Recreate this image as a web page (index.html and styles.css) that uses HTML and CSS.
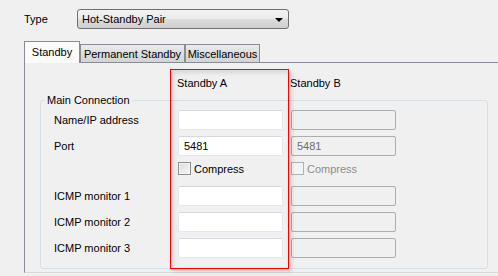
FILE: index.html
```html
<!DOCTYPE html>
<html lang="en">
<head>
  <meta charset="UTF-8">
  <meta name="viewport" content="width=device-width, initial-scale=1.0">
  <title>Hot-Standby Pair</title>
  <link rel="stylesheet" href="styles.css">
</head>
<body>
  <div class="type-row">
    <span class="type-label">Type</span>
    <div class="combo">
      <span>Hot-Standby Pair</span>
      <span class="arrow"></span>
    </div>
  </div>

  <div class="tabs">
    <div class="tab active">Standby</div>
    <div class="tab tab-permanent">Permanent Standby</div>
    <div class="tab tab-misc">Miscellaneous</div>
  </div>

  <div class="panel">
    <div class="col-heads">
      <span>Standby A</span>
      <span>Standby B</span>
    </div>

    <fieldset class="group">
      <legend>Main Connection</legend>
      <div class="form">
        <span class="label">Name/IP address</span>
        <div class="field"></div>
        <div class="field disabled"></div>

        <span class="label">Port</span>
        <div class="field">5481</div>
        <div class="field disabled">5481</div>

        <span></span>
        <div class="check-row"><span class="check"></span>Compress</div>
        <div class="check-row disabled"><span class="check"></span>Compress</div>

        <span class="label">ICMP monitor 1</span>
        <div class="field"></div>
        <div class="field disabled"></div>

        <span class="label">ICMP monitor 2</span>
        <div class="field"></div>
        <div class="field disabled"></div>

        <span class="label">ICMP monitor 3</span>
        <div class="field"></div>
        <div class="field disabled"></div>
      </div>
    </fieldset>
  </div>

  <div class="highlight"></div>
</body>
</html>
```

FILE: styles.css
```css
body {
	margin: 0;
	width: 498px;
	height: 276px;
	overflow: hidden;
	background: #f0f0f0;
	font-family: "Liberation Sans", Arial, sans-serif;
	font-size: 11px;
	color: #000;
	position: relative;
}

.type-row {
	display: flex;
	align-items: center;
	padding: 9px 0 0 24px;
}

.type-label {
	width: 53px;
}

.combo {
	box-sizing: border-box;
	width: 212px;
	height: 20px;
	display: flex;
	align-items: center;
	justify-content: space-between;
	padding: 0 5px 0 4px;
	border: 1px solid #707070;
	border-radius: 3px;
	background: linear-gradient(#f2f2f2, #ebebeb 50%, #dddddd 50%, #cfcfcf);
}

.arrow {
	width: 0;
	height: 0;
	border-left: 4px solid transparent;
	border-right: 4px solid transparent;
	border-top: 4px solid #000;
	margin-top: 1px;
}

.tabs {
	display: flex;
	align-items: flex-end;
	height: 21px;
	margin: 12px 0 0 24px;
}

.tab {
	box-sizing: border-box;
	height: 18px;
	display: flex;
	align-items: center;
	justify-content: center;
	border: 1px solid #898c95;
	border-bottom: none;
	background: linear-gradient(#ececec, #dddddd 50%, #d4d4d4);
	color: #000;
}

.tab.active {
	position: relative;
	z-index: 1;
	width: 56px;
	height: 22px;
	margin-bottom: -1px;
	padding-bottom: 2px;
	background: #fbfbfb;
}

.tab-permanent {
	width: 105px;
}

.tab-misc {
	width: 75px;
}

.panel {
	margin-left: 24px;
	border-top: 1px solid #898c95;
	border-left: 1px solid #898c95;
	border-bottom: 1px solid #d9d9d9;
	padding-bottom: 3px;
}

.col-heads {
	display: grid;
	grid-template-columns: 113px auto;
	padding: 13px 0 0 152px;
	line-height: 14px;
}

.group {
	width: 448px;
	box-sizing: border-box;
	margin: 3px 0 0 15px;
	padding: 0 0 10px 0;
	border: 1px solid #d5dfe5;
	border-radius: 3px;
}

.group legend {
	margin-left: 4px;
	padding: 0 2px;
	line-height: 14px;
}

.form {
	display: grid;
	grid-template-columns: 116px 105px 105px;
	grid-template-rows: 20px 20px 18px 20px 20px 20px;
	column-gap: 8px;
	row-gap: 6px;
	align-items: center;
	padding: 3px 0 0 13px;
}

.field {
	box-sizing: border-box;
	height: 20px;
	display: flex;
	align-items: center;
	padding-left: 5px;
	background: #fff;
	border: 1px solid #e3e9ef;
	border-top-color: #d5d9df;
	border-radius: 2px;
}

.field.disabled {
	background: #f0f0f0;
	border-color: #adadad;
	color: #6d6d6d;
}

.check-row {
	display: flex;
	align-items: center;
	gap: 3px;
	align-self: start;
}

.check {
	box-sizing: border-box;
	width: 13px;
	height: 13px;
	border: 1px solid #8e8f8f;
	background: linear-gradient(135deg, #dcdcdc, #f8f8f8);
	box-shadow: inset 0 0 0 1px #f4f4f4;
}

.check-row.disabled {
	color: #8d8d8d;
}

.check-row.disabled .check {
	border-color: #b1b1b1;
	background: #f4f4f4;
}

/* annotation box drawn over the Standby A column */
.highlight {
	position: absolute;
	left: 170px;
	top: 69px;
	width: 119px;
	height: 200px;
	box-sizing: border-box;
	border: 1px solid #ff0000;
	box-shadow: 3px 3px 4px rgba(0, 0, 0, 0.12), inset 3px 3px 4px rgba(0, 0, 0, 0.1);
}
```
